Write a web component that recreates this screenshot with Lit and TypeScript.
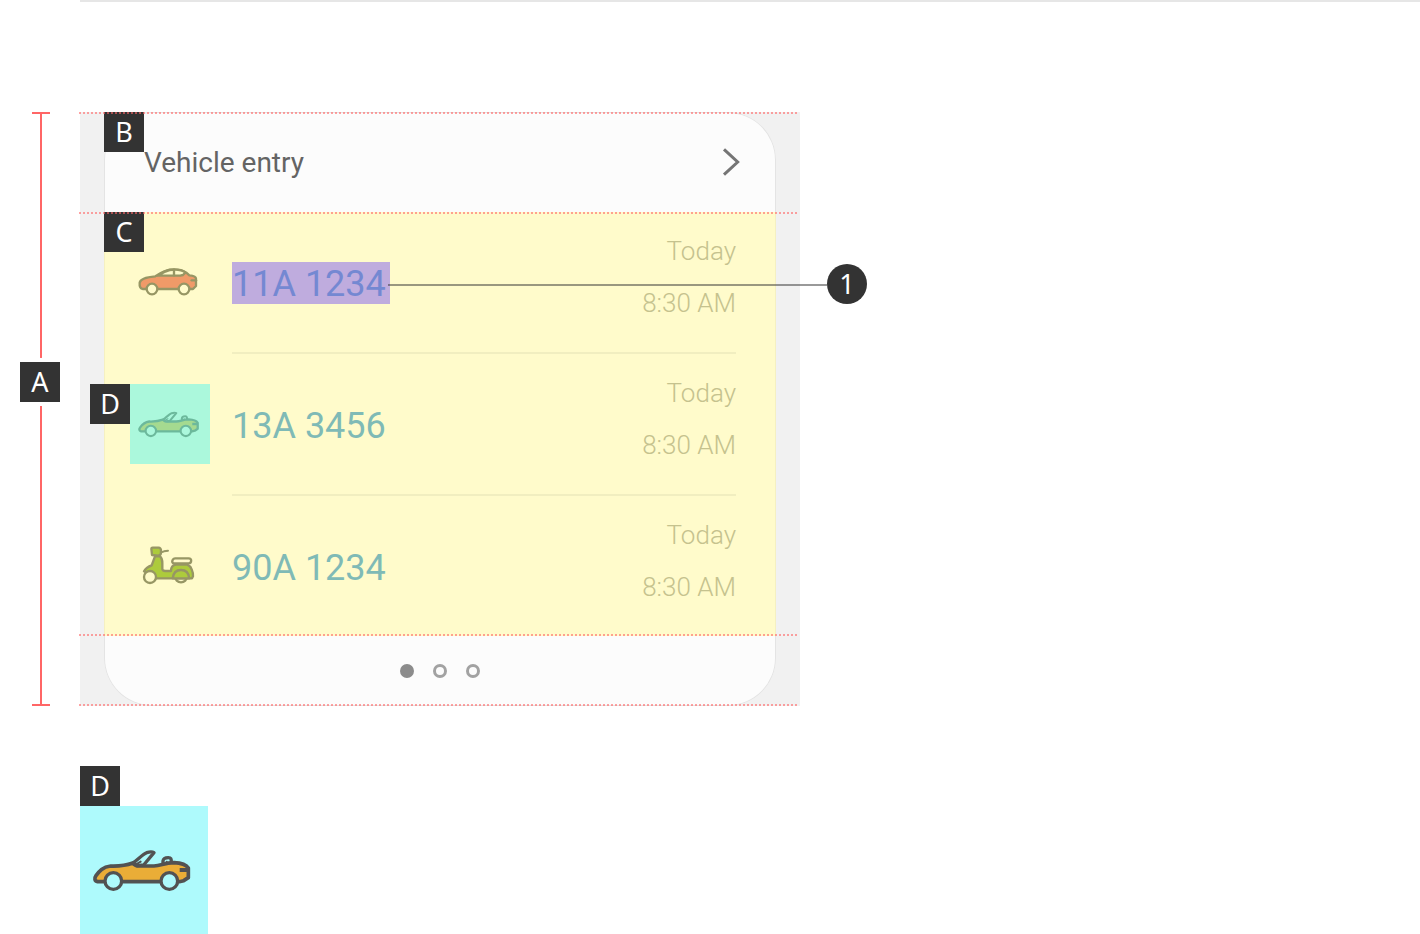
import { LitElement, html, css, svg } from "lit";
import { customElement } from "lit/decorators.js";

interface Entry {
  kind: "sedan" | "convertible" | "scooter";
  plate: string;
  day: string;
  time: string;
}

const entries: Entry[] = [
  { kind: "sedan", plate: "11A 1234", day: "Today", time: "8:30 AM" },
  { kind: "convertible", plate: "13A 3456", day: "Today", time: "8:30 AM" },
  { kind: "scooter", plate: "90A 1234", day: "Today", time: "8:30 AM" },
];

const sedan = svg`
  <g class="sedan" stroke-width="7" stroke-linejoin="round" stroke-linecap="round">
    <path class="fill" d="M80 117H70C61 116 59 109 60 98C62 87 82 81 107 79C121 70 134 61 150 59C174 57 188 60 200 68L209 76C222 77 229 80 229 86V108L220 117Z"/>
    <path class="glass" d="M115 77C124 70 137 63 150 60C174 57 188 60 197 68L190 75L182 77Z"/>
    <path class="line" d="M163 59V76"/>
    <path class="line" d="M216 91H229"/>
    <circle class="glass" cx="97" cy="117" r="16"/>
    <circle class="glass" cx="193" cy="117" r="16"/>
  </g>`;

const convertible = svg`
  <g class="convertible" stroke-width="11" stroke-linejoin="round" stroke-linecap="round">
    <path class="glass" stroke-width="10" d="M267 312V303C268 295 273 293 283 293C291 293 292 296 292 307"/>
    <path class="line" stroke-width="6" d="M278 305V309"/>
    <path class="fill" d="M92 365H71C61 363 61 354 66 347C76 333 86 321 110 318C140 319 160 315 176 309C183 317 187 318 195 318H240C262 317 270 309 300 308C320 309 336 313 343 324V353L329 362L316 365Z"/>
    <path class="glass" stroke-width="10" d="M178 308C192 299 204 284 218 278C228 275 235 275 240 278L209 315L190 317Z"/>
    <path class="line" stroke-width="6" d="M190 311L200 305"/>
    <path class="line" stroke-linecap="butt" stroke-width="12" d="M317 330H343"/>
    <circle class="glass" stroke-width="10" cx="118" cy="363" r="25"/>
    <circle class="glass" stroke-width="10" cx="286" cy="363" r="25"/>
  </g>`;

const scooter = svg`
  <g class="scooter" stroke-width="7" stroke-linejoin="round" stroke-linecap="round">
    <circle class="glass" cx="153" cy="124" r="18"/>
    <path class="fill" d="M42 109C48 99 56 94 65 91L75 64H90C95 68 97 76 97 84V103C98 107 101 108 106 108H123C123 97 128 90 138 89H172C184 94 190 112 189 124L186 130H78Z"/>
    <path class="fill" d="M128 130C130 113 139 105 153 105C167 105 176 113 178 130Z"/>
    <path class="fill" d="M64 41C64 39 66 38 68 38H86C90 38 93 42 93 46V52C93 58 89 62 84 62L66 60Z"/>
    <path class="line" stroke-width="6" d="M94 52L102 49L114 47"/>
    <path class="glass" d="M136 70H176C186 70 186 84 176 85H130C124 82 127 70 136 70Z"/>
    <circle class="glass" cx="60" cy="126" r="18"/>
  </g>`;

const drawings = {
  sedan: { box: "31 -24 240 240", shape: sedan },
  convertible: { box: "18 138 384 384", shape: convertible },
  scooter: { box: "0 -27 240 240", shape: scooter },
};

@customElement("app-root")
export class AppRoot extends LitElement {
  static styles = css`
    :host {
      display: block;
      min-height: 100vh;
      background: #fff;
      font-family: Roboto, "Noto Sans", sans-serif;
      --line: #979664;
      --glass: #fffbcb;
      --dot: rgba(255, 102, 102, 0.6);
    }
    .page { overflow: hidden; }
    .rule {
      height: 2px;
      margin: 0 0 0 80px;
      border: 0;
      background: #e6e6e6;
    }
    .anatomy {
      display: flex;
      gap: 20px;
      margin: 110px 20px 60px;
    }
    .badge {
      flex: none;
      box-sizing: border-box;
      width: 40px;
      height: 40px;
      background: #333;
      color: #fff;
      font: 400 27px/40px "Noto Sans", sans-serif;
      text-align: center;
    }
    .badge.round { border-radius: 50%; }

    .ruler {
      display: flex;
      flex-direction: column;
      align-items: flex-start;
      gap: 4px;
      width: 40px;
    }
    .segment {
      box-sizing: border-box;
      width: 18px;
      margin-left: 12px;
      background: linear-gradient(#f66, #f66) center / 2px 100% no-repeat;
    }
    .segment.upper { flex: 9; border-top: 2px solid #f66; }
    .segment.lower { flex: 11; border-bottom: 2px solid #f66; }

    .panel {
      flex: 0 1 720px;
      box-sizing: border-box;
      padding: 0 24px;
      background: #f1f1f1;
    }
    .card {
      position: relative;
      border-radius: 48px;
      background: #fcfcfc;
      box-shadow: inset 0 0 0 1px #e4e4e4;
    }
    .section { position: relative; }
    .section::before,
    .pager::after {
      content: "";
      position: absolute;
      z-index: 1;
      top: 0;
      left: -25px;
      right: -22px;
      height: 2px;
      background: repeating-linear-gradient(90deg, var(--dot) 0 2px, transparent 2px 4px);
    }
    .pager::before { top: -2px; }
    .pager::after { top: auto; bottom: 0; }
    .section > .badge {
      position: absolute;
      top: 0;
      left: 0;
    }

    .header {
      display: flex;
      align-items: center;
      justify-content: space-between;
      height: 100px;
      padding: 0 36px 0 40px;
    }
    .title {
      margin: 0;
      padding-top: 2px;
      color: #646464;
      font-size: 28px;
      font-weight: 400;
      line-height: 40px;
    }
    .more {
      display: block;
      padding: 0;
      border: 0;
      background: none;
    }
    .chevron { display: block; width: 18px; height: 28px; }

    .list {
      margin: 0;
      padding: 0;
      list-style: none;
      background: #fffbcb;
      box-shadow: inset 1px 0 #f5f0c2, inset -1px 0 #f5f0c2;
    }
    .row {
      position: relative;
      display: flex;
      gap: 22px;
      padding: 0 40px 0 26px;
    }
    .thumb {
      position: relative;
      flex: none;
      width: 80px;
      height: 80px;
      margin-top: 30px;
    }
    .thumb.marked {
      background: #abf8dc;
      --line: #6cb99c;
      --glass: #abf8dc;
    }
    .thumb .badge {
      position: absolute;
      top: 0;
      right: 100%;
    }
    .icon { display: block; width: 100%; height: 100%; }
    .fill { stroke: var(--line); }
    .line { stroke: var(--line); fill: none; }
    .glass { stroke: var(--line); fill: var(--glass); }
    .sedan .fill { fill: #f09a68; }
    .convertible .fill { fill: var(--body, #a5da90); }
    .scooter .fill { fill: #adcb3c; }

    .content {
      flex: 1;
      display: flex;
      align-items: flex-start;
      justify-content: space-between;
      padding: 13px 0 23px;
      border-bottom: 2px solid #f1eec0;
    }
    .row:last-child .content { border-bottom: 0; }
    .plate {
      margin-top: 37px;
      padding: 2px 4px 0 0;
      color: #7fbab6;
      font-size: 36px;
      line-height: 40px;
    }
    .plate.selected { background: #bfacde; color: #7488d2; }
    .when {
      color: #c5c28e;
      font-size: 26px;
      font-weight: 300;
      line-height: 52px;
      text-align: right;
    }
    .when span { display: block; }
    .callout {
      position: absolute;
      top: 52px;
      left: 284px;
      right: -91px;
      display: flex;
      align-items: center;
    }
    .lead { flex: 1; height: 2px; margin-top: 2px; background: rgba(51, 51, 51, 0.5); }

    .pager {
      display: flex;
      align-items: center;
      justify-content: center;
      gap: 19px;
      height: 70px;
    }
    .page-dot {
      box-sizing: border-box;
      width: 14px;
      height: 14px;
      padding: 0;
      border: 3px solid #a2a2a2;
      border-radius: 50%;
      background: none;
    }
    .page-dot.current { border-color: #8c8c8c; background: #8c8c8c; }

    .detail { margin-left: 80px; }
    .swatch {
      width: 128px;
      height: 128px;
      background: #aefafc;
      --line: #525252;
      --glass: #aefafc;
      --body: #eaad37;
    }
  `;

  private icon(kind: Entry["kind"]) {
    const d = drawings[kind];
    return html`<svg class="icon" viewBox=${d.box} role="img" aria-label=${kind}>${d.shape}</svg>`;
  }

  private row(entry: Entry, i: number) {
    return html`
      <li class="row">
        <div class="thumb ${i === 1 ? "marked" : ""}">
          ${this.icon(entry.kind)}
          ${i === 1 ? html`<span class="badge">D</span>` : null}
        </div>
        <div class="content">
          <span class="plate ${i === 0 ? "selected" : ""}">${entry.plate}</span>
          <div class="when"><span>${entry.day}</span><span>${entry.time}</span></div>
        </div>
        ${i === 0
          ? html`<div class="callout"><span class="lead"></span><span class="badge round">1</span></div>`
          : null}
      </li>`;
  }

  render() {
    return html`
      <main class="page">
        <hr class="rule" />
        <section class="anatomy">
          <div class="ruler">
            <span class="segment upper"></span>
            <span class="badge">A</span>
            <span class="segment lower"></span>
          </div>
          <div class="panel">
            <article class="card">
              <header class="section header">
                <span class="badge">B</span>
                <h2 class="title">Vehicle entry</h2>
                <button class="more" type="button" aria-label="Open vehicle entry">
                  <svg class="chevron" viewBox="0 0 54 84">
                    <path d="M6 4L47 42L6 80" fill="none" stroke="#757575" stroke-width="9" />
                  </svg>
                </button>
              </header>
              <div class="section">
                <span class="badge">C</span>
                <ul class="list">${entries.map((e, i) => this.row(e, i))}</ul>
              </div>
              <nav class="section pager" aria-label="Pages">
                ${[0, 1, 2].map(
                  (n) => html`<button class="page-dot ${n === 0 ? "current" : ""}" type="button" aria-label="Page ${n + 1}"></button>`
                )}
              </nav>
            </article>
          </div>
        </section>
        <section class="detail">
          <div class="badge">D</div>
          <div class="swatch">${this.icon("convertible")}</div>
        </section>
      </main>
    `;
  }
}
